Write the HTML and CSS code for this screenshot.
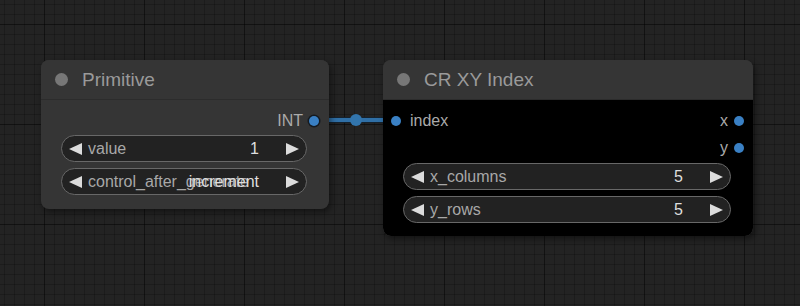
FILE: index.html
```html
<!DOCTYPE html>
<html>
<head>
<meta charset="utf-8">
<link rel="stylesheet" href="styles.css">
</head>
<body>
<div class="canvas">
  <svg class="links" width="800" height="306" viewBox="0 0 800 306">
    <line x1="316" y1="120" x2="396" y2="120" stroke="#15222e" stroke-width="6"/>
    <line x1="316" y1="120" x2="396" y2="120" stroke="#2f6fa6" stroke-width="4"/>
    <circle cx="356" cy="120" r="6" fill="#3275ad"/>
  </svg>

  <div class="node node-primitive">
    <div class="title"><span class="title-dot"></span><span class="title-text">Primitive</span></div>
    <div class="body">
      <div class="slot-row">
        <span class="slot-out">INT</span><span class="dot dot-ring"></span>
      </div>
      <div class="widgets">
        <div class="widget">
          <svg class="arrow" width="13" height="12" viewBox="0 0 13 12"><polygon points="13,0 13,12 0,6" fill="#dcdcdc"/></svg>
          <span class="w-label">value</span>
          <span class="w-value">1</span>
          <svg class="arrow arrow-r" width="13" height="12" viewBox="0 0 13 12"><polygon points="0,0 0,12 13,6" fill="#dcdcdc"/></svg>
        </div>
        <div class="widget">
          <svg class="arrow" width="13" height="12" viewBox="0 0 13 12"><polygon points="13,0 13,12 0,6" fill="#dcdcdc"/></svg>
          <span class="w-label">control_after_generate</span>
          <span class="w-value">increment</span>
          <svg class="arrow arrow-r" width="13" height="12" viewBox="0 0 13 12"><polygon points="0,0 0,12 13,6" fill="#dcdcdc"/></svg>
        </div>
      </div>
    </div>
  </div>

  <div class="node node-xy">
    <div class="title"><span class="title-dot"></span><span class="title-text">CR XY Index</span></div>
    <div class="body body-black">
      <div class="slot-row">
        <span class="dot"></span><span class="slot-in">index</span>
        <span class="slot-out">x</span><span class="dot"></span>
      </div>
      <div class="slot-row">
        <span class="slot-out">y</span><span class="dot"></span>
      </div>
      <div class="widgets widgets-xy">
        <div class="widget">
          <svg class="arrow" width="13" height="12" viewBox="0 0 13 12"><polygon points="13,0 13,12 0,6" fill="#dcdcdc"/></svg>
          <span class="w-label">x_columns</span>
          <span class="w-value">5</span>
          <svg class="arrow arrow-r" width="13" height="12" viewBox="0 0 13 12"><polygon points="0,0 0,12 13,6" fill="#dcdcdc"/></svg>
        </div>
        <div class="widget">
          <svg class="arrow" width="13" height="12" viewBox="0 0 13 12"><polygon points="13,0 13,12 0,6" fill="#dcdcdc"/></svg>
          <span class="w-label">y_rows</span>
          <span class="w-value">5</span>
          <svg class="arrow arrow-r" width="13" height="12" viewBox="0 0 13 12"><polygon points="0,0 0,12 13,6" fill="#dcdcdc"/></svg>
        </div>
      </div>
    </div>
  </div>
</div>
</body>
</html>
```

FILE: styles.css
```css
* { box-sizing: border-box; }
html, body {
  margin: 0;
  padding: 0;
}
body {
  width: 800px;
  height: 306px;
  overflow: hidden;
  font-family: "Liberation Sans", Arial, sans-serif;
}
.canvas {
  position: relative;
  width: 800px;
  height: 306px;
  background-color: #232323;
  background-image:
    linear-gradient(to right, rgba(0,0,0,0.35) 1px, transparent 1px),
    linear-gradient(to bottom, rgba(0,0,0,0.35) 1px, transparent 1px),
    linear-gradient(to right, rgba(0,0,0,0.2) 1px, transparent 1px),
    linear-gradient(to bottom, rgba(0,0,0,0.2) 1px, transparent 1px);
  background-size: 100px 100px, 100px 100px, 10px 10px, 10px 10px;
  background-position: 44px 24px, 44px 24px, 4px 4px, 4px 4px;
}
.links {
  position: absolute;
  left: 0;
  top: 0;
}
.node {
  position: absolute;
  border-radius: 8px;
  background: #353535;
  box-shadow: 2px 3px 6px rgba(0,0,0,0.45);
  display: flex;
  flex-direction: column;
  overflow: hidden;
}
.node-primitive {
  left: 41px;
  top: 60px;
  width: 288px;
  height: 149px;
}
.node-xy {
  left: 383px;
  top: 60px;
  width: 370px;
  height: 176px;
}
.title {
  height: 40px;
  flex: none;
  display: flex;
  align-items: center;
  padding-left: 14px;
  gap: 14px;
  border-bottom: 1px solid #2c2c2c;
  background: #353535;
}
.title-dot {
  width: 13px;
  height: 13px;
  border-radius: 50%;
  background: #777;
}
.title-text {
  font-size: 19px;
  color: #9a9a9a;
}
.body {
  flex: 1;
  padding-top: 7px;
  display: flex;
  flex-direction: column;
}
.body-black {
  background: #000;
  border-radius: 0 0 8px 8px;
}
.slot-row {
  height: 27px;
  display: flex;
  align-items: center;
  padding: 0 9px 0 8px;
  font-size: 16px;
  color: #aaa;
}
.slot-in {
  margin-left: 9px;
}
.slot-out {
  margin-left: auto;
  margin-right: 6px;
}
.dot {
  width: 10px;
  height: 10px;
  border-radius: 50%;
  background: #3a80c4;
  flex: none;
}
.dot-ring {
  box-shadow: 0 0 0 1.5px #151a20;
  margin-right: 1px;
}
.widgets {
  display: flex;
  flex-direction: column;
  gap: 6px;
  padding: 1px 22px 0 20px;
}
.widgets-xy {
  padding-top: 2px;
}
.widget {
  height: 27px;
  border: 1px solid #686868;
  border-radius: 14px;
  background: #222;
  display: flex;
  align-items: center;
  padding: 0 7px 0 7px;
  font-size: 16px;
  white-space: nowrap;
}
.arrow {
  flex: none;
}
.w-label {
  flex: 1 1 0;
  min-width: 0;
  margin-left: 6px;
  color: #a8a8a8;
  overflow: visible;
}
.w-value {
  flex: none;
  color: #dedede;
  margin-right: 27px;
}
```
